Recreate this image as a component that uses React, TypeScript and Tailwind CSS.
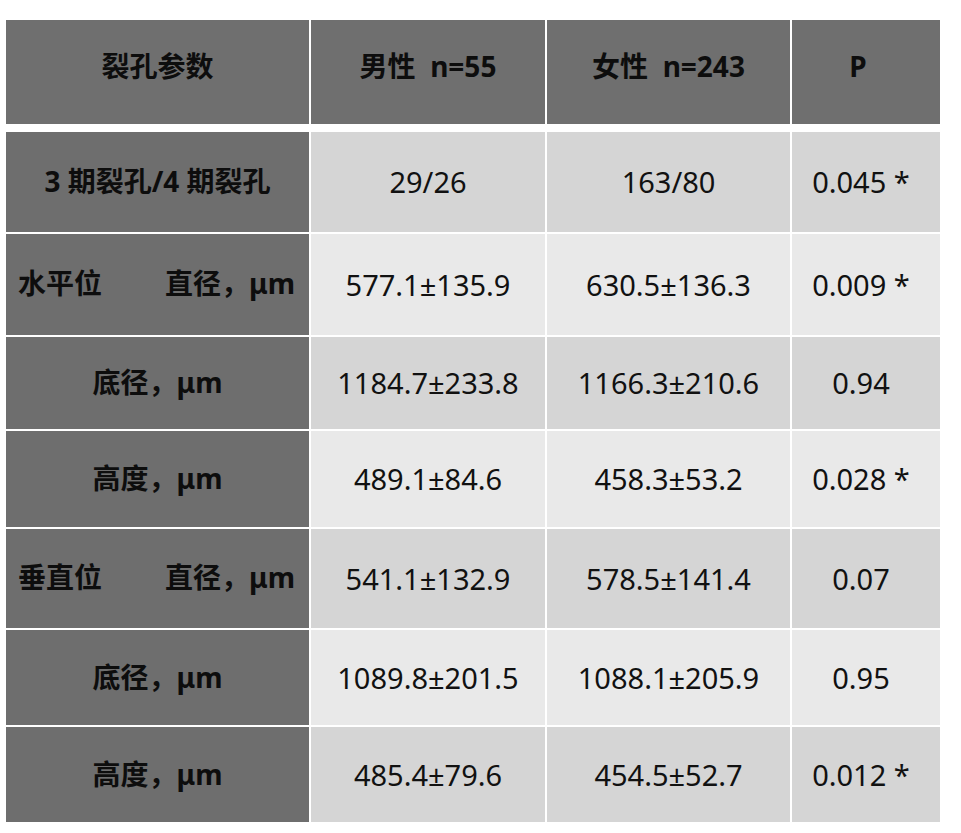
const font = { fontFamily: '"Noto Sans", "Noto Sans CJK SC", sans-serif' };

type Row = {
  label: string;
  male: string;
  female: string;
  p: string;
  h: string;
  shade: string;
};

const dark = "bg-[#6e6e6e]";

const rows: Row[] = [
  { label: "3 期裂孔/4 期裂孔", male: "29/26", female: "163/80", p: "0.045 *", h: "h-[100px]", shade: "bg-[#d5d5d5]" },
  { label: "split:水平位", male: "577.1±135.9", female: "630.5±136.3", p: "0.009 *", h: "h-[101px]", shade: "bg-[#e9e9e9]" },
  { label: "底径，μm", male: "1184.7±233.8", female: "1166.3±210.6", p: "0.94", h: "h-[92px]", shade: "bg-[#d5d5d5]" },
  { label: "高度，μm", male: "489.1±84.6", female: "458.3±53.2", p: "0.028 *", h: "h-[96px]", shade: "bg-[#e9e9e9]" },
  { label: "split:垂直位", male: "541.1±132.9", female: "578.5±141.4", p: "0.07", h: "h-[99px]", shade: "bg-[#d5d5d5]" },
  { label: "底径，μm", male: "1089.8±201.5", female: "1088.1±205.9", p: "0.95", h: "h-[95px]", shade: "bg-[#e9e9e9]" },
  { label: "高度，μm", male: "485.4±79.6", female: "454.5±52.7", p: "0.012 *", h: "h-[95px]", shade: "bg-[#d5d5d5]" },
];

const cols = "grid grid-cols-[303px_234px_243px_148px] gap-x-[2px]";

function LabelCell({ label }: { label: string }) {
  if (label.startsWith("split:")) {
    return (
      <div className={`${dark} flex items-center justify-between pl-[12px] pr-[14px] pb-[4px] text-[28px] font-bold text-[#0d0d0d]`}>
        <span>{label.slice(6)}</span>
        <span>直径，μm</span>
      </div>
    );
  }
  return (
    <div className={`${dark} flex items-center justify-center pb-[2px] text-[28px] font-bold text-[#0d0d0d]`}>
      {label}
    </div>
  );
}

const headers = [
  { t: "裂孔参数", pad: "" },
  { t: "男性  n=55", pad: "" },
  { t: "女性  n=243", pad: "" },
  { t: "P", pad: "pr-[16px]" },
];

export default function App() {
  return (
    <div className="min-h-[833px] w-[961px] bg-white pl-[6px] pt-[20px]" style={font}>
      <div className={`${cols} h-[104px]`}>
        {headers.map((h) => (
          <div
            key={h.t}
            className={`flex items-center justify-center whitespace-pre bg-[#6f6f6f] pb-[12px] text-[28px] font-bold text-[#0d0d0d] ${h.pad}`}
          >
            {h.t}
          </div>
        ))}
      </div>
      <div className={`${cols} mt-[8px] gap-y-[2px]`}>
        {rows.map((r, i) => (
          <div key={i} className={`col-span-4 grid grid-cols-subgrid ${r.h}`}>
            <LabelCell label={r.label} />
            <div className={`${r.shade} flex items-center justify-center text-[29px] text-[#111]`}>{r.male}</div>
            <div className={`${r.shade} flex items-center justify-center text-[29px] text-[#111]`}>{r.female}</div>
            <div className={`${r.shade} flex items-center justify-center pr-[10px] text-[29px] text-[#111]`}>{r.p}</div>
          </div>
        ))}
      </div>
    </div>
  );
}
